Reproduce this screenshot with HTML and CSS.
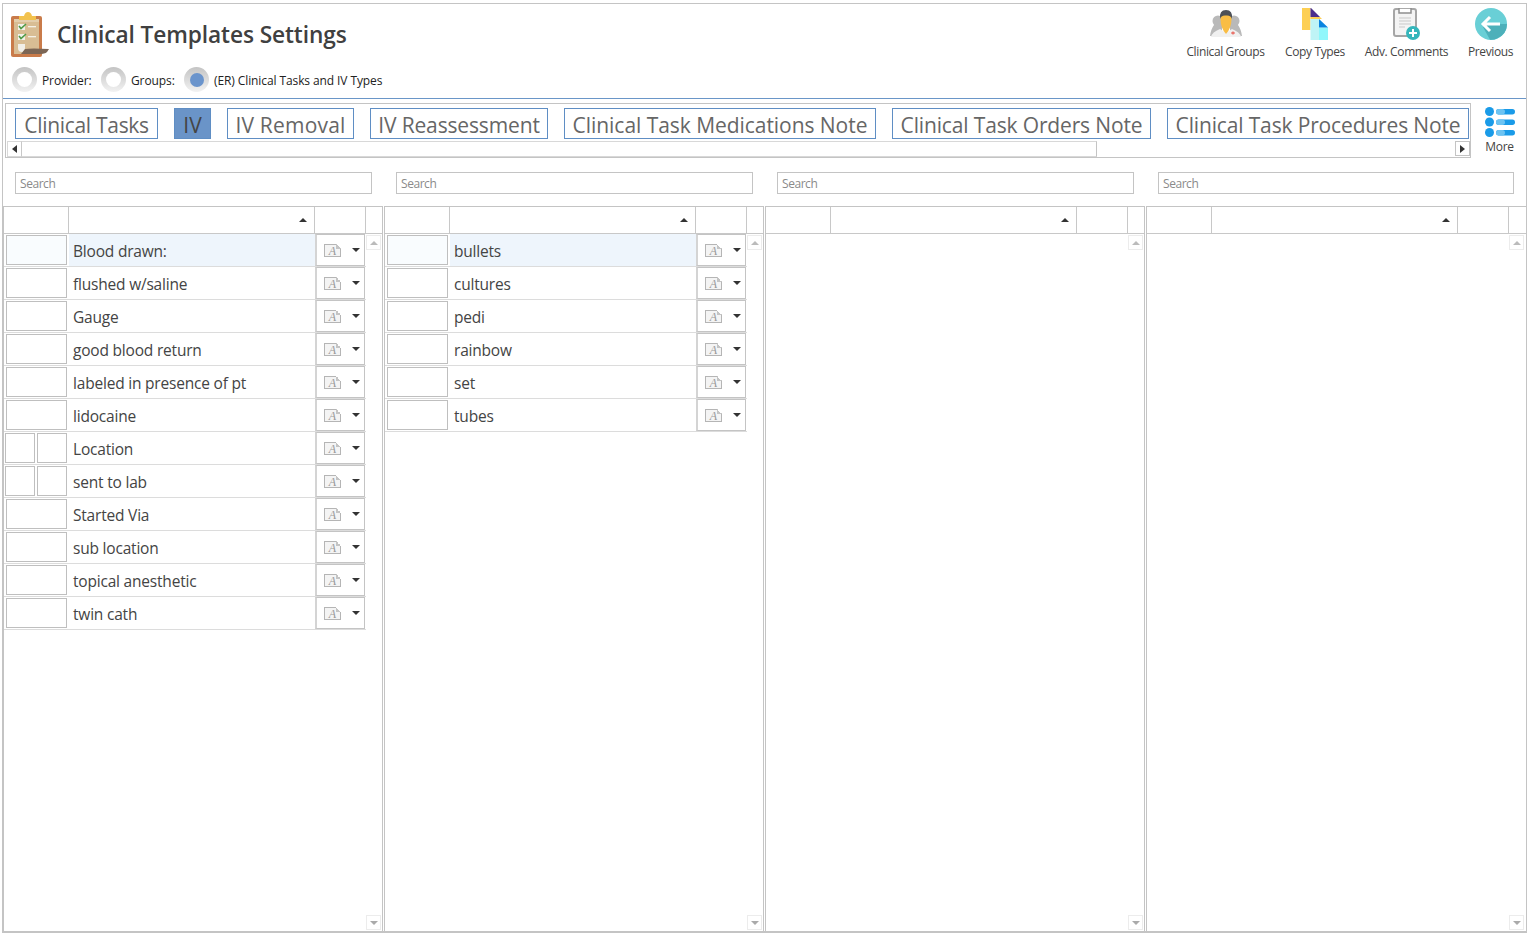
FILE: index.html
```
<!DOCTYPE html>
<html lang="en">
<head>
<meta charset="utf-8">
<title>Clinical Templates Settings</title>
<link rel="stylesheet" href="styles.css">
</head>
<body>
<main class="frame">
  <header class="top">
    <div class="top-left">
      <div class="title-row">
        <svg class="clip" width="38" height="45" viewBox="0 0 38 45">
          <rect x="0" y="4" width="31" height="41" rx="2" fill="#c97b4a"/>
          <rect x="3" y="7" width="25" height="35" fill="#d8bd94"/>
          <path d="M3 7H28V10H3Z" fill="#e3ceac"/>
          <path d="M8 7V4H13Q14 0 17 0Q20 0 21 4H25V8H8Z" fill="#f2c24e"/>
          <rect x="7" y="12" width="7" height="6" fill="#f1f1ea"/>
          <path d="M8 14L10 16.500L15 12" fill="none" stroke="#4d9a45" stroke-width="1.600"/>
          <rect x="17" y="14" width="8" height="1.300" fill="#f4f0e6"/>
          <rect x="7" y="22" width="7" height="6" fill="#f1f1ea"/>
          <path d="M8 24L10 26.500L15 22" fill="none" stroke="#4d9a45" stroke-width="1.600"/>
          <rect x="17" y="24" width="8" height="1.300" fill="#f4f0e6"/>
          <path d="M7 32H14V36Q14 40 11 40Q7 40 7 36Z" fill="#f1efe8"/>
          <path d="M14 37Q20 36 38 37L36 40Q34 42 28 42H10Z" fill="#7c6655"/>
        </svg>
        <h1 class="title">Clinical Templates Settings</h1>
      </div>
      <div class="radios">
        <span class="radio"></span><span class="radio-label label-provider">Provider:</span>
        <span class="radio"></span><span class="radio-label label-groups">Groups:</span>
        <span class="radio radio-on"></span><span class="radio-label">(ER) Clinical Tasks and IV Types</span>
      </div>
    </div>
    <nav class="actions">
      <div class="action action-groups">
        <svg width="36" height="32" viewBox="0 0 36 32">
          <circle cx="10" cy="13" r="5.500" fill="#b9b9b9"/><circle cx="26" cy="13" r="5.500" fill="#b9b9b9"/>
          <path d="M2 28Q3 21 6 17H14V28ZM34 28Q33 21 30 17H22V28Z" fill="#b9b9b9"/>
          <path d="M3 29Q4 24 12 21L18 25L24 21Q32 24 33 29Z" fill="#f0f0f0"/>
          <path d="M12.500 11Q12.500 5 18 5Q23.500 5 23.500 11Q23.500 20 18 26Q12.500 20 12.500 11Z" fill="#f9bd45"/>
          <path d="M12 11Q11 2 18 2Q25 2 24 11Q23 7 18 7.500Q13 7 12 11Z" fill="#4c5057"/>
          <path d="M23 25H27M25 23.500V26.500" stroke="#e8574d" stroke-width="1.200"/>
        </svg>
        <span>Clinical Groups</span>
      </div>
      <div class="action action-copy">
        <svg width="26" height="32" viewBox="0 0 26 32">
          <rect x="0" y="0" width="8.500" height="22" fill="#fdcf54"/>
          <path d="M8.500 0H9L18 9H8.500Z" fill="#4b2e8e"/>
          <path d="M8.500 9H18L20 11H8.500Z" fill="#fdcf54"/>
          <path d="M8.500 11H17V32H8.500Z" fill="#bff4f6"/>
          <path d="M17 19.500H26V32H17Z" fill="#90f7fb"/>
          <path d="M17 11L26 19.500H17Z" fill="#0a84e0"/>
        </svg>
        <span>Copy Types</span>
      </div>
      <div class="action action-comments">
        <svg width="28" height="32" viewBox="0 0 28 32">
          <rect x="1" y="1" width="22" height="27" rx="2" fill="#f4f4f4" stroke="#a6a6a6" stroke-width="2"/>
          <path d="M6 0H18V5H6Z" fill="#fff" stroke="#8f8f8f" stroke-width="1.500"/>
          <path d="M6 10H18M6 13H18M6 16H18M6 19H12" stroke="#c9c9c9"/>
          <circle cx="20" cy="25" r="7" fill="#35b6bb"/>
          <path d="M20 21V29M16 25H24" stroke="#fff" stroke-width="2"/>
        </svg>
        <span>Adv. Comments</span>
      </div>
      <div class="action action-prev">
        <svg width="32" height="32" viewBox="0 0 32 32">
          <circle cx="16" cy="16" r="16" fill="#69cfd6"/>
          <path d="M11 16H32Q32 26 22 30.500Q19 32 15 31.700L8 19Z" fill="#4db0ba"/>
          <path d="M15 9L8 16L15 23M8 16H25" fill="none" stroke="#fff" stroke-width="3"/>
        </svg>
        <span>Previous</span>
      </div>
    </nav>
  </header>

  <section class="tabs-row">
    <div class="tabs-box">
      <div class="tabs">
        <span class="tab tab-tasks">Clinical Tasks</span>
        <span class="tab tab-iv tab-on">IV</span>
        <span class="tab tab-removal">IV Removal</span>
        <span class="tab tab-reassess">IV Reassessment</span>
        <span class="tab tab-meds">Clinical Task Medications Note</span>
        <span class="tab tab-orders">Clinical Task Orders Note</span>
        <span class="tab tab-procs">Clinical Task Procedures Note</span>
      </div>
      <div class="hscroll">
        <span class="hbtn"><i class="tri-left"></i></span>
        <span class="hthumb"></span>
        <span class="hbtn hbtn-right"><i class="tri-right"></i></span>
      </div>
    </div>
    <div class="more">
      <svg width="30" height="30" viewBox="0 0 30 30">
        <circle cx="4.500" cy="4.500" r="4.500" fill="#1a9be8"/><circle cx="4.500" cy="15" r="4.500" fill="#1a9be8"/><circle cx="4.500" cy="25.500" r="4.500" fill="#1a9be8"/>
        <rect x="11" y="2" width="19" height="5.500" rx="2.700" fill="#1a9be8"/><rect x="11" y="12.500" width="19" height="5.500" rx="2.700" fill="#1a9be8"/><rect x="11" y="23" width="19" height="5.500" rx="2.700" fill="#1a9be8"/>
        <rect x="11" y="2" width="9" height="5.500" rx="2.700" fill="#6cc3f2"/><rect x="11" y="12.500" width="9" height="5.500" rx="2.700" fill="#6cc3f2"/><rect x="11" y="23" width="9" height="5.500" rx="2.700" fill="#6cc3f2"/>
      </svg>
      <span>More</span>
    </div>
  </section>

  <section class="searches">
    <div class="search">Search</div>
    <div class="search">Search</div>
    <div class="search">Search</div>
    <div class="search">Search</div>
  </section>

  <section class="lists">
    <div class="list">
      <div class="list-head"><span class="h1"></span><span class="h2"><i class="sort"></i></span><span class="h3"></span><span class="h4"></span></div>
      <div class="list-body">
        <div class="rows">
          <div class="row row-on"><div class="check"><span class="box"></span></div><div class="name">Blood drawn:</div><div class="act"><span class="note">A</span><i class="tri-down"></i></div></div>
          <div class="row"><div class="check"><span class="box"></span></div><div class="name">flushed w/saline</div><div class="act"><span class="note">A</span><i class="tri-down"></i></div></div>
          <div class="row"><div class="check"><span class="box"></span></div><div class="name">Gauge</div><div class="act"><span class="note">A</span><i class="tri-down"></i></div></div>
          <div class="row"><div class="check"><span class="box"></span></div><div class="name">good blood return</div><div class="act"><span class="note">A</span><i class="tri-down"></i></div></div>
          <div class="row"><div class="check"><span class="box"></span></div><div class="name">labeled in presence of pt</div><div class="act"><span class="note">A</span><i class="tri-down"></i></div></div>
          <div class="row"><div class="check"><span class="box"></span></div><div class="name">lidocaine</div><div class="act"><span class="note">A</span><i class="tri-down"></i></div></div>
          <div class="row"><div class="check check-split"><span class="box"></span><span class="box"></span></div><div class="name">Location</div><div class="act"><span class="note">A</span><i class="tri-down"></i></div></div>
          <div class="row"><div class="check check-split"><span class="box"></span><span class="box"></span></div><div class="name">sent to lab</div><div class="act"><span class="note">A</span><i class="tri-down"></i></div></div>
          <div class="row"><div class="check"><span class="box"></span></div><div class="name">Started Via</div><div class="act"><span class="note">A</span><i class="tri-down"></i></div></div>
          <div class="row"><div class="check"><span class="box"></span></div><div class="name">sub location</div><div class="act"><span class="note">A</span><i class="tri-down"></i></div></div>
          <div class="row"><div class="check"><span class="box"></span></div><div class="name">topical anesthetic</div><div class="act"><span class="note">A</span><i class="tri-down"></i></div></div>
          <div class="row"><div class="check"><span class="box"></span></div><div class="name">twin cath</div><div class="act"><span class="note">A</span><i class="tri-down"></i></div></div>
        </div>
        <div class="vscroll"><span class="vbtn"><i class="up"></i></span><span class="vbtn"><i class="down"></i></span></div>
      </div>
    </div>
    <div class="list">
      <div class="list-head"><span class="h1"></span><span class="h2"><i class="sort"></i></span><span class="h3"></span><span class="h4"></span></div>
      <div class="list-body">
        <div class="rows">
          <div class="row row-on"><div class="check"><span class="box"></span></div><div class="name">bullets</div><div class="act"><span class="note">A</span><i class="tri-down"></i></div></div>
          <div class="row"><div class="check"><span class="box"></span></div><div class="name">cultures</div><div class="act"><span class="note">A</span><i class="tri-down"></i></div></div>
          <div class="row"><div class="check"><span class="box"></span></div><div class="name">pedi</div><div class="act"><span class="note">A</span><i class="tri-down"></i></div></div>
          <div class="row"><div class="check"><span class="box"></span></div><div class="name">rainbow</div><div class="act"><span class="note">A</span><i class="tri-down"></i></div></div>
          <div class="row"><div class="check"><span class="box"></span></div><div class="name">set</div><div class="act"><span class="note">A</span><i class="tri-down"></i></div></div>
          <div class="row"><div class="check"><span class="box"></span></div><div class="name">tubes</div><div class="act"><span class="note">A</span><i class="tri-down"></i></div></div>
        </div>
        <div class="vscroll"><span class="vbtn"><i class="up"></i></span><span class="vbtn"><i class="down"></i></span></div>
      </div>
    </div>
    <div class="list">
      <div class="list-head"><span class="h1"></span><span class="h2"><i class="sort"></i></span><span class="h3"></span><span class="h4"></span></div>
      <div class="list-body"><div class="rows"></div><div class="vscroll"><span class="vbtn"><i class="up"></i></span><span class="vbtn"><i class="down"></i></span></div></div>
    </div>
    <div class="list">
      <div class="list-head"><span class="h1"></span><span class="h2"><i class="sort"></i></span><span class="h3"></span><span class="h4"></span></div>
      <div class="list-body"><div class="rows"></div><div class="vscroll"><span class="vbtn"><i class="up"></i></span><span class="vbtn"><i class="down"></i></span></div></div>
    </div>
  </section>
</main>
</body>
</html>
```

FILE: styles.css
```
* { box-sizing: border-box; }
html, body { margin: 0; padding: 0; background: #fff; overflow: hidden; }
body { font-family: "Open Sans", "Noto Sans", sans-serif; color: #444; width: 1532px; height: 936px; }

.frame {
  margin: 3px 0 0 2px; width: 1525px; height: 930px;
  border: 1px solid #c4c4c4; border-bottom-width: 2px;
  display: flex; flex-direction: column;
}

.top { height: 95px; flex: none; display: flex; justify-content: space-between; border-bottom: 1px solid #6a96c8; }
.top-left { display: flex; flex-direction: column; }
.title-row { display: flex; align-items: flex-start; height: 63px; padding: 8px 0 0 8px; }
.clip { flex: none; }
.title { margin: 8px 0 0 8px; font-size: 22.700px; font-weight: 600; line-height: 30px; color: #404040; letter-spacing: -.1px; white-space: nowrap; }
.radios { display: flex; align-items: center; padding-left: 9px; height: 25px; font-size: 12px; color: #222; letter-spacing: -.1px; }
.radio {
  width: 25px; height: 25px; border-radius: 50%; flex: none;
  background: linear-gradient(#c4c4c4, #f2f2f2);
  display: flex; align-items: center; justify-content: center;
}
.radio::after { content: ""; width: 15px; height: 15px; border-radius: 50%; background: #fff; }
.radio-on::after { background: #6a94cc; width: 14px; height: 14px; }
.radio-label { margin: 2px 0 0 5px; white-space: nowrap; }
.label-provider { width: 59px; }
.label-groups { width: 53px; margin-left: 5px; }

.actions { display: flex; gap: 20px; padding-top: 4px; padding-right: 13px; }
.action { display: flex; flex-direction: column; align-items: center; font-size: 12px; color: #444; letter-spacing: -.38px; white-space: nowrap; }
.action svg { flex: none; }
.action span { margin-top: 3px; line-height: 17px; }
.action-groups { width: 79px; }
.action-copy { width: 60px; }
.action-comments { width: 83px; }
.action-prev { width: 45px; }

.tabs-row { height: 61px; flex: none; display: flex; padding: 4px 0 0 2px; }
.tabs-box { width: 1466px; height: 55px; border: 1px solid #c4c4c4; }
.tabs { display: flex; gap: 16px; padding: 4px 0 0 9px; height: 37px; white-space: nowrap; }
.tab { height: 31px; border: 1px solid #5f8ec4; font-size: 21px; line-height: 33px; color: #666; text-align: center; flex: none; }
.tab-tasks { width: 143px; letter-spacing: -.3px; }
.tab-iv { width: 37px; }
.tab-removal { width: 127px; letter-spacing: .2px; }
.tab-reassess { width: 178px; letter-spacing: -.15px; }
.tab-meds { width: 312px; letter-spacing: -.05px; }
.tab-orders { width: 259px; letter-spacing: -.15px; }
.tab-procs { width: 302px; letter-spacing: -.15px; }
.tab-on { background: #6a94c8; color: #444; }
.hscroll { display: flex; height: 16px; margin-left: 1px; width: 1463px; position: relative; }
.hbtn { width: 15px; flex: none; display: flex; align-items: center; justify-content: center; background: #fff; border: 1px solid #d8d8d8; border-right-color: #c8c8c8; }
.hbtn-right { position: absolute; right: 0; top: 0; width: 15px; height: 15px; border-color: #c4c4c4; }
.hthumb { width: 1075px; border: 1px solid #d8d8d8; border-left: 0; border-right-color: #c4c4c4; }
.tri-left { border: 4px solid transparent; border-left: 0; border-right: 5px solid #333; }
.tri-right { border: 4px solid transparent; border-right: 0; border-left: 5px solid #333; }

.more { width: 56px; display: flex; flex-direction: column; align-items: center; padding-top: 4px; margin-left: 2px; font-size: 12px; color: #444; letter-spacing: -.35px; }
.more svg { flex: none; }
.more span { line-height: 16px; margin-top: 2px; }

.searches { flex: none; height: 46px; display: grid; grid-template-columns: repeat(4, 381px); padding-top: 12px; }
.search { margin-left: 12px; width: 357px; height: 22px; border: 1px solid #c4c4c4; font-size: 12px; line-height: 22px; padding-left: 4px; color: #8a8a8a; letter-spacing: -.45px; }
.search:last-child { width: 356px; }

.lists { flex: 1; min-height: 0; display: grid; grid-template-columns: repeat(3, 381px) 380px; }
.list { display: flex; flex-direction: column; margin-right: 1px; border-left: 1px solid #c4c4c4; border-right: 1px solid #c4c4c4; border-top: 1px solid #c4c4c4; }
.list:last-child { border-right: 0; margin-right: 0; }
.list-head { height: 27px; flex: none; display: flex; border-bottom: 1px solid #c8c8c8; }
.list-head span { border-right: 1px solid #c8c8c8; }
.h1 { width: 65px; }
.h2 { width: 246px; display: flex; align-items: center; justify-content: flex-end; padding-right: 7px; }
.h3 { width: 51px; }
.h4 { flex: 1; border-right: 0 !important; }
.sort { border: 4px solid transparent; border-top: 0; border-bottom: 4px solid #333; }
.list-body { flex: 1; min-height: 0; display: flex; }
.rows { width: 362px; flex: none; }
.row { height: 33px; display: flex; border-bottom: 1px solid #dcdcdc; }
.row-on .name { background: #eef5fc; }
.check { width: 65px; flex: none; display: flex; gap: 2px; height: 32px; padding: 1px 2px 1px 2px; }
.check-split { padding-left: 1px; }
.box { flex: 1; border: 1px solid #bfbfbf; }
.row-on .box { background: #f9fcfe; }
.name { width: 246px; height: 32px; flex: none; padding-left: 4px; font-size: 15.500px; line-height: 35px; color: #444; letter-spacing: -.2px; white-space: nowrap; }
.act { width: 50px; flex: none; height: 32px; border: 1px solid #c4c4c4; border-left: 2px solid #d4d4d4; display: flex; align-items: center; justify-content: space-between; padding: 0 4px 0 7px; background: #fff; }
.note { position: relative; width: 17px; height: 13px; flex: none; border: 1px solid #b5b5b5; background: #f4f4f4; font: italic 12px/12px "Liberation Serif", serif; color: #999; text-align: center; }
.note::after { content: ""; position: absolute; top: -1px; right: -1px; width: 5px; height: 5px; background: linear-gradient(to top right, #c4c4c4 50%, #fff 50%); }
.tri-down { border: 4px solid transparent; border-bottom: 0; border-top: 4px solid #333; }
.vscroll { flex: 1; display: flex; flex-direction: column; justify-content: space-between; align-items: flex-end; padding: 1px 3px 1px 0; }
.vbtn { width: 15px; height: 15px; border: 1px solid #ececec; display: flex; align-items: center; justify-content: center; }
.up { border: 4px solid transparent; border-top: 0; border-bottom: 4px solid #bbb; }
.down { border: 4px solid transparent; border-bottom: 0; border-top: 4px solid #aaa; }
```
